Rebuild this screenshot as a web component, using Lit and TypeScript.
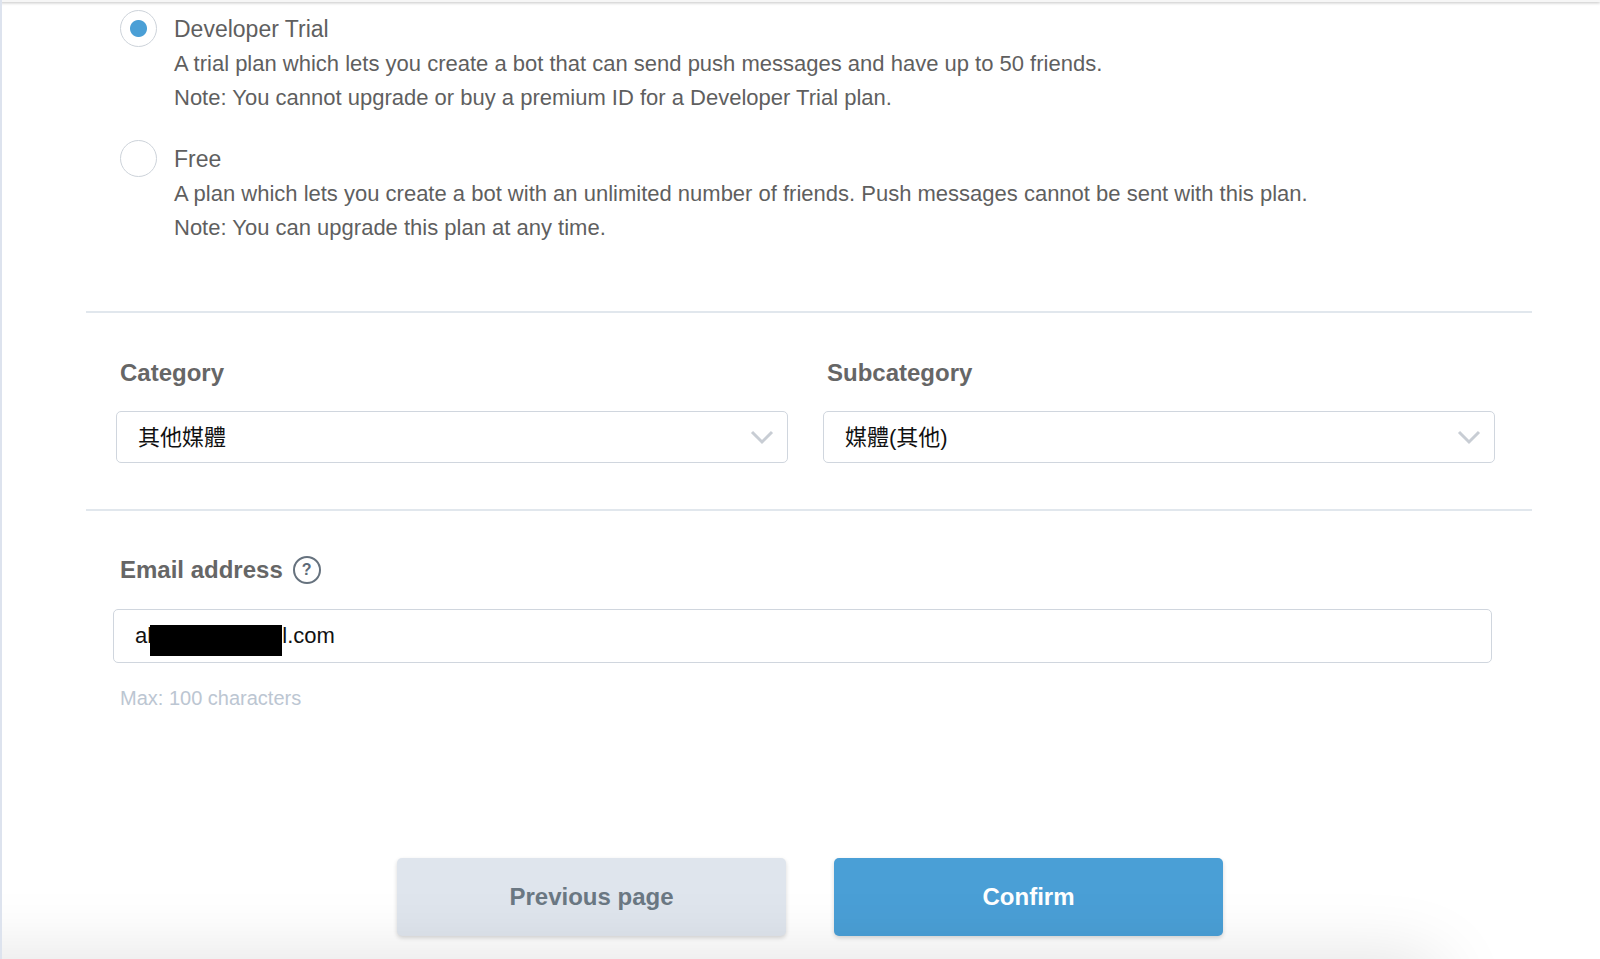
import { LitElement, html, css } from "lit";
import { customElement, state } from "lit/decorators.js";

interface Plan {
  id: string;
  name: string;
  lines: string[];
}

const PLANS: Plan[] = [
  {
    id: "trial",
    name: "Developer Trial",
    lines: [
      "A trial plan which lets you create a bot that can send push messages and have up to 50 friends.",
      "Note: You cannot upgrade or buy a premium ID for a Developer Trial plan.",
    ],
  },
  {
    id: "free",
    name: "Free",
    lines: [
      "A plan which lets you create a bot with an unlimited number of friends. Push messages cannot be sent with this plan.",
      "Note: You can upgrade this plan at any time.",
    ],
  },
];

const SELECTS = [
  { id: "category", label: "Category", value: "其他媒體" },
  { id: "subcategory", label: "Subcategory", value: "媒體(其他)" },
];

// The middle of the address is blank; the redaction bar lies over it.
const EMAIL = "al" + "\u00a0".repeat(21) + "\u200al.com";

@customElement("app-root")
export class AppRoot extends LitElement {
  @state() private plan = "trial";

  static styles = css`
    :host {
      display: block;
      font-family: "Liberation Sans", "Noto Sans CJK TC", sans-serif;
      color: #5f5f5f;
    }
    * {
      box-sizing: border-box;
    }
    .page {
      position: relative;
      min-height: 100vh;
      overflow: hidden;
      background: #fff;
      border-left: 2px solid #dde3ee;
    }
    .topbar {
      height: 2px;
      margin-left: -2px;
      background: #f6f6f6;
      box-shadow: 0 1px 3px rgba(0, 0, 0, 0.28);
    }
    .form {
      margin: 0 68px 0 84px;
    }
    .section {
      padding: 0 37px 0 30px;
      border-bottom: 2px solid #e1e7ed;
    }
    .plans {
      display: flex;
      flex-direction: column;
      gap: 25px;
      margin: 0;
      padding: 8px 0 66px 34px;
      border: 0;
      border-bottom: 2px solid #e1e7ed;
    }
    .plan {
      display: grid;
      grid-template-columns: 38px 1fr;
      column-gap: 16px;
    }
    .radio {
      appearance: none;
      width: 37px;
      height: 37px;
      margin: 0;
      border: 1px solid #cdd3da;
      border-radius: 50%;
      background: #fff;
    }
    .radio:checked {
      background: radial-gradient(circle, #4a9fd6 8px, #fff 9px);
    }
    .plan-text {
      font-size: 22px;
      line-height: 34px;
    }
    .plan-name {
      display: block;
      padding: 2px 0 1px;
      font-size: 23px;
      line-height: 34px;
    }
    .plan-line {
      display: block;
    }
    .selects {
      display: grid;
      grid-template-columns: 1fr 1fr;
      gap: 35px;
      padding-top: 44px;
      padding-bottom: 46px;
    }
    .label {
      display: block;
      padding-left: 4px;
      font-size: 24px;
      font-weight: 700;
      line-height: 32px;
      color: #666;
    }
    .select-box {
      position: relative;
      margin-top: 22px;
    }
    .select,
    .input {
      display: block;
      width: 100%;
      border: 1px solid #d0d6de;
      border-radius: 5px;
      background: #fff;
      color: #111;
      font-family: inherit;
      font-size: 22px;
      padding: 0 21px;
    }
    .select {
      appearance: none;
      height: 52px;
    }
    .chevron {
      position: absolute;
      right: 14px;
      top: 19px;
      width: 24px;
      height: 16px;
      pointer-events: none;
    }
    .email {
      padding: 43px 40px 0 27px;
    }
    .email-head {
      display: flex;
      align-items: center;
      gap: 10px;
      padding-left: 3px;
    }
    .help {
      display: block;
      width: 28px;
      height: 28px;
      padding: 0;
      border: 2px solid #66727e;
      border-radius: 50%;
      background: none;
      color: #5d6a77;
      font: 700 16px/24px "Liberation Sans", sans-serif;
      text-align: center;
    }
    .input-box {
      position: relative;
      margin-top: 23px;
    }
    .input {
      height: 54px;
    }
    .redaction {
      position: absolute;
      left: 37px;
      top: 16px;
      width: 132px;
      height: 31px;
      background: #000;
    }
    .hint {
      margin: 21px 0 0;
      padding-left: 7px;
      font-size: 20px;
      line-height: 28px;
      color: #bcc6d2;
    }
    .actions {
      display: grid;
      grid-template-columns: 389px 389px;
      justify-content: center;
      gap: 48px;
      padding: 146px 0 24px 2px;
    }
    .button {
      height: 78px;
      padding: 0;
      border: 0;
      border-radius: 5px;
      font-family: inherit;
      font-size: 24px;
      font-weight: 700;
      box-shadow: 0 2px 4px rgba(0, 0, 0, 0.16);
    }
    .previous {
      background: #dfe5ed;
      color: #6b7883;
    }
    .confirm {
      background: #4a9fd6;
      color: #fff;
    }
    .shade {
      position: absolute;
      left: -120px;
      right: 170px;
      bottom: -60px;
      height: 50px;
      box-shadow: 0 0 72px 10px rgba(0, 0, 0, 0.13);
      border-radius: 10px;
      pointer-events: none;
    }
  `;

  private renderPlan(plan: Plan) {
    return html`
      <div class="plan">
        <input
          class="radio"
          type="radio"
          name="plan"
          id=${plan.id}
          .checked=${this.plan === plan.id}
          @change=${() => (this.plan = plan.id)}
        />
        <label class="plan-text" for=${plan.id}>
          <span class="plan-name">${plan.name}</span>
          ${plan.lines.map((l) => html`<span class="plan-line">${l}</span>`)}
        </label>
      </div>
    `;
  }

  render() {
    return html`
      <main class="page">
        <div class="topbar"></div>
        <form class="form" @submit=${(e: Event) => e.preventDefault()}>
          <fieldset class="plans">${PLANS.map((p) => this.renderPlan(p))}</fieldset>

          <div class="section selects">
            ${SELECTS.map(
              (s) => html`
                <div>
                  <label class="label" for=${s.id}>${s.label}</label>
                  <div class="select-box">
                    <select class="select" id=${s.id}>
                      <option>${s.value}</option>
                    </select>
                    <svg class="chevron" viewBox="0 0 24 16" fill="none" stroke="#c8cdd4" stroke-width="3">
                      <path d="M2 2 L12 12 L22 2" />
                    </svg>
                  </div>
                </div>
              `
            )}
          </div>

          <div class="email">
            <div class="email-head">
              <label class="label" for="email">Email address</label>
              <button class="help" type="button">?</button>
            </div>
            <div class="input-box">
              <input class="input" id="email" type="text" inputmode="email" maxlength="100" .value=${EMAIL} />
              <span class="redaction"></span>
            </div>
            <p class="hint">Max: 100 characters</p>
          </div>

          <div class="actions">
            <button class="button previous" type="button">Previous page</button>
            <button class="button confirm" type="submit">Confirm</button>
          </div>
        </form>
        <div class="shade"></div>
      </main>
    `;
  }
}
